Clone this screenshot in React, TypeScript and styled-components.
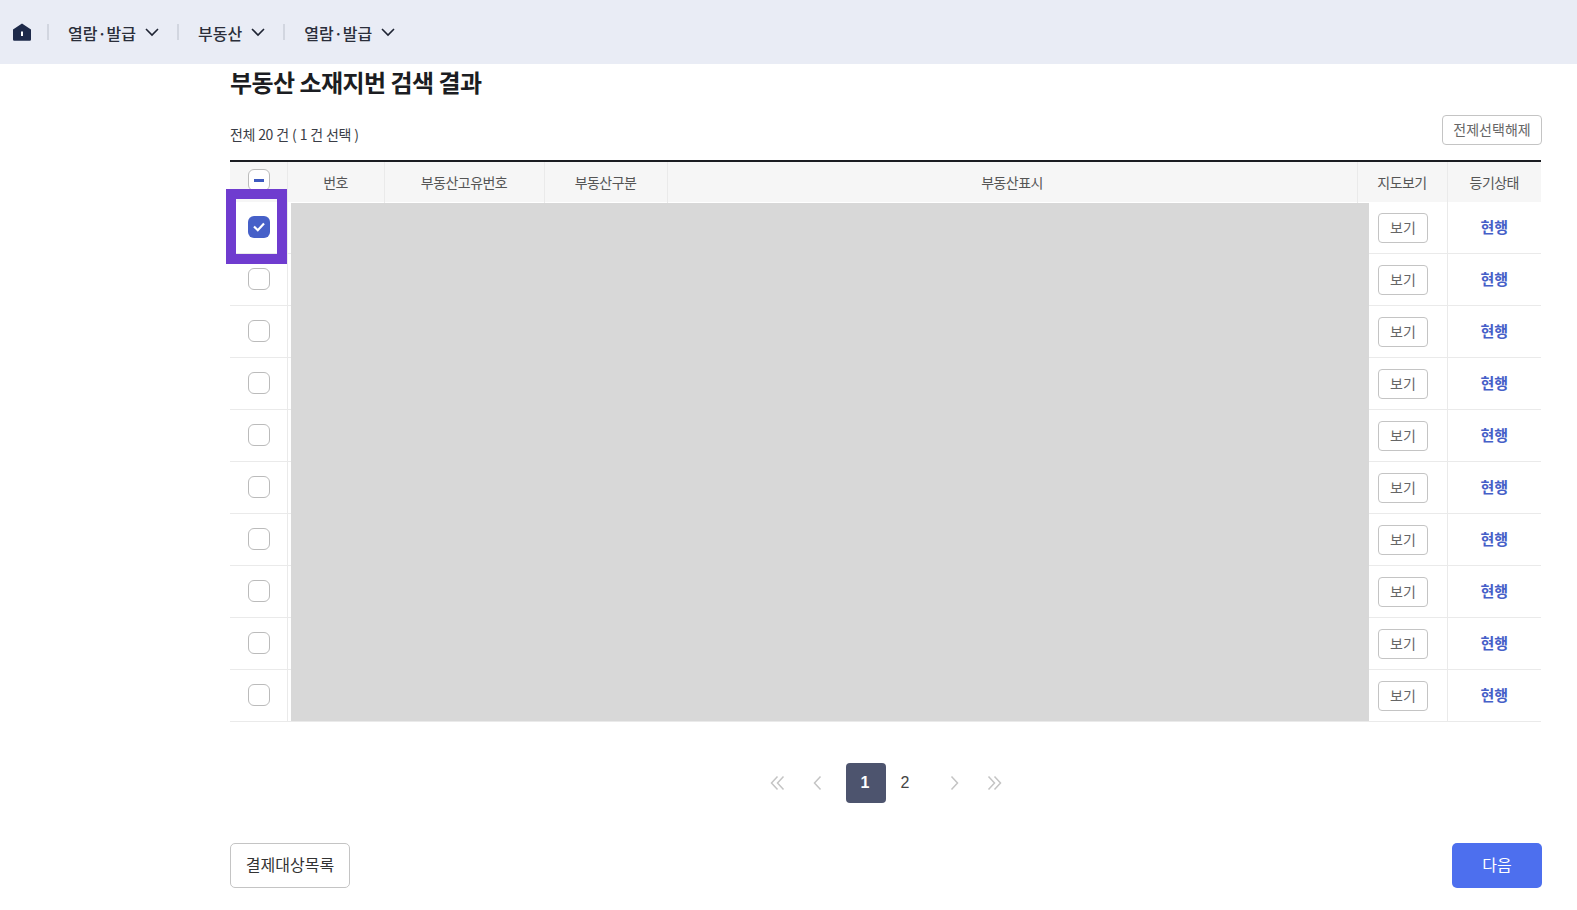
import React from "react"
import styled, { createGlobalStyle } from "styled-components"

const rows = Array.from({ length: 10 }, (_, i) => i)

const Chevron = () => (
  <ChevronIcon width="14" height="9" viewBox="0 0 14 9" fill="none">
    <path d="M1 1l6 6 6-6" stroke="#1f2433" strokeWidth="1.6" />
  </ChevronIcon>
)

const HomeIcon = () => (
  <svg width="18" height="18" viewBox="0 0 18 18">
    <path
      d="M9 .5L18 6.500V16.500a1.200 1.200 0 0 1-1.200 1.200H1.200A1.200 1.200 0 0 1 0 16.500V6.500z"
      fill="#1e2a4a"
    />
    <rect x="8" y="8.500" width="2" height="4.500" fill="#fff" />
  </svg>
)

const PageArrow = ({ d }: { d: string }) => (
  <svg width="16" height="16" viewBox="0 0 16 16" fill="none">
    <path d={d} stroke="#c4c4c4" strokeWidth="1.5" />
  </svg>
)

export default function App() {
  return (
    <>
      <GlobalStyle />
      <TopBar>
        <HomeIcon />
        <Divider />
        <NavItem>
          열람·발급 <Chevron />
        </NavItem>
        <Divider />
        <NavItem>
          부동산 <Chevron />
        </NavItem>
        <Divider />
        <NavItem>
          열람·발급 <Chevron />
        </NavItem>
      </TopBar>

      <Main>
        <Title>부동산 소재지번 검색 결과</Title>
        <SummaryRow>
          <Summary>전체 20 건 ( 1 건 선택 )</Summary>
          <ClearButton>전제선택해제</ClearButton>
        </SummaryRow>

        <TableWrap>
          <Table>
            <colgroup>
              <col width="57" />
              <col width="97" />
              <col width="160" />
              <col width="123" />
              <col />
              <col width="90" />
              <col width="94" />
            </colgroup>
            <thead>
              <tr>
                <Th>
                  <CheckBox>
                    <Dash />
                  </CheckBox>
                </Th>
                <Th>번호</Th>
                <Th>부동산고유번호</Th>
                <Th>부동산구분</Th>
                <Th>부동산표시</Th>
                <Th>지도보기</Th>
                <Th>등기상태</Th>
              </tr>
            </thead>
            <tbody>
              {rows.map((row) => (
                <tr key={row}>
                  <CheckCell>
                    <CheckBox $checked={row === 0}>
                      {row === 0 && (
                        <svg width="12" height="10" viewBox="0 0 12 10" fill="none">
                          <path d="M1 4.500L4.800 8.200L11 1.500" stroke="#fff" strokeWidth="2.200" />
                        </svg>
                      )}
                    </CheckBox>
                  </CheckCell>
                  <Td />
                  <Td />
                  <Td />
                  <Td />
                  <Td>
                    <ViewButton>보기</ViewButton>
                  </Td>
                  <StatusCell>
                    <Status>현행</Status>
                  </StatusCell>
                </tr>
              ))}
            </tbody>
          </Table>
          <Redaction />
          <Highlight />
        </TableWrap>

        <Pagination>
          <PageButton>
            <PageArrow d="M8.500 1.500L2.500 8l6 6.500M14.500 1.500L8.500 8l6 6.500" />
          </PageButton>
          <PageButton>
            <PageArrow d="M11.500 1.500L5.500 8l6 6.500" />
          </PageButton>
          <PageNumbers>
            <PageNumber $active>1</PageNumber>
            <PageNumber>2</PageNumber>
          </PageNumbers>
          <PageButton>
            <PageArrow d="M4.500 1.500L10.500 8l-6 6.500" />
          </PageButton>
          <PageButton>
            <PageArrow d="M1.500 1.500L7.500 8l-6 6.500M7.500 1.500L13.500 8l-6 6.500" />
          </PageButton>
        </Pagination>

        <Footer>
          <OutlineButton>결제대상목록</OutlineButton>
          <PrimaryButton>다음</PrimaryButton>
        </Footer>
      </Main>
    </>
  )
}

const GlobalStyle = createGlobalStyle`
  body {
    margin: 0;
    background: #fff;
    font-family: "Noto Sans CJK KR", "Noto Sans", sans-serif;
    color: #1f2433;
  }
`

const TopBar = styled.header`
  display: flex;
  align-items: center;
  height: 64px;
  padding-left: 13px;
  background: #e9ecf5;
`

const Divider = styled.span`
  width: 2px;
  height: 16px;
  margin: 0 19px 0 16px;
  background: #d2d6e0;
`

const NavItem = styled.div`
  display: flex;
  align-items: center;
  gap: 9px;
  margin-right: 2px;
  padding-top: 2px;
  font-size: 16px;
  font-weight: 500;
  color: #2a2e3a;
`

const ChevronIcon = styled.svg`
  margin-bottom: 2px;
`

const Main = styled.main`
  width: 1312px;
  margin-left: 230px;
`

const Title = styled.h1`
  margin: 0;
  height: 38px;
  font-size: 24px;
  line-height: 36px;
  font-weight: 700;
  letter-spacing: -0.55px;
  color: #1b1d22;
`

const SummaryRow = styled.div`
  display: flex;
  justify-content: space-between;
  align-items: flex-start;
  height: 58px;
  padding-top: 13px;
  box-sizing: border-box;
`

const Summary = styled.span`
  margin-top: 9px;
  font-size: 14px;
  line-height: 20px;
  letter-spacing: -0.4px;
  word-spacing: 0.55px;
  color: #3a3d46;
`

const ClearButton = styled.button`
  width: 100px;
  height: 30px;
  padding: 0 0 2px;
  border: 1px solid #c4c4c4;
  border-radius: 4px;
  background: #fff;
  font: inherit;
  font-size: 14px;
  color: #666;
`

const TableWrap = styled.div`
  position: relative;
  width: 1311px;
`

const Table = styled.table`
  width: 100%;
  table-layout: fixed;
  border-collapse: collapse;
  border-top: 2px solid #1b1d22;
`

const Th = styled.th`
  height: 40px;
  padding: 0;
  background: #f6f6f6;
  border-left: 1px solid #eaeaea;
  font-size: 14px;
  font-weight: 400;
  letter-spacing: -0.55px;
  color: #555;
  &:first-child {
    padding-left: 1px;
    border-left: 0;
  }
  & > span {
    margin-top: -8px;
    vertical-align: middle;
  }
`

const Td = styled.td`
  height: 51px;
  padding: 0;
  text-align: center;
  border-left: 1px solid #eaeaea;
  border-bottom: 1px solid #eaeaea;
  &:first-child {
    border-left: 0;
  }
`

const CheckCell = styled(Td)`
  padding: 0 0 4px 1px;
  box-sizing: border-box;
`

const StatusCell = styled(Td)`
  padding-bottom: 4px;
  box-sizing: border-box;
`

const CheckBox = styled.span<{ $checked?: boolean }>`
  display: inline-flex;
  align-items: center;
  justify-content: center;
  width: 22px;
  height: 22px;
  box-sizing: border-box;
  vertical-align: middle;
  border-radius: 6px;
  border: ${(p) => (p.$checked ? "0" : "1px solid #bbb")};
  background: ${(p) => (p.$checked ? "#4660c8" : "#fff")};
`

const Dash = styled.span`
  width: 10px;
  height: 3px;
  background: #3f5bc0;
`

const ViewButton = styled.button`
  width: 50px;
  height: 30px;
  margin-left: 2px;
  padding: 0 0 2px;
  border: 1px solid #c4c4c4;
  border-radius: 4px;
  background: #fff;
  font: inherit;
  font-size: 14px;
  color: #666;
`

const Status = styled.span`
  font-size: 15px;
  font-weight: 700;
  color: #4660c8;
`

const Redaction = styled.div`
  position: absolute;
  left: 61px;
  top: 43px;
  width: 1078px;
  height: 518px;
  background: #d8d8d8;
`

const Highlight = styled.div`
  position: absolute;
  left: -4px;
  top: 29px;
  width: 61px;
  height: 75px;
  box-sizing: border-box;
  border: 10px solid #6f3ccf;
`

const Pagination = styled.nav`
  display: flex;
  justify-content: center;
  margin-top: 41px;
`

const PageNumbers = styled.div`
  display: flex;
  margin: 0 9px;
`

const PageButton = styled.button<{ $active?: boolean }>`
  display: flex;
  align-items: center;
  justify-content: center;
  width: 40px;
  height: 40px;
  padding: 0;
  border: 0;
  border-radius: 4px;
  background: ${(p) => (p.$active ? "#4d546e" : "transparent")};
  color: ${(p) => (p.$active ? "#fff" : "#444")};
  font-family: "Liberation Sans", Arial, sans-serif;
  font-size: 16px;
  font-weight: ${(p) => (p.$active ? 700 : 400)};
`

const PageNumber = styled(PageButton)`
  padding-right: 2px;
`

const Footer = styled.div`
  display: flex;
  justify-content: space-between;
  margin-top: 40px;
`

const OutlineButton = styled.button`
  width: 120px;
  height: 45px;
  padding: 0 0 3px;
  border: 1px solid #c4c4c4;
  border-radius: 5px;
  background: #fff;
  font: inherit;
  font-size: 16px;
  color: #333;
`

const PrimaryButton = styled.button`
  width: 90px;
  height: 45px;
  padding: 0 0 3px;
  border: 0;
  border-radius: 5px;
  background: #4d6fee;
  font: inherit;
  font-size: 16px;
  color: #fff;
`
